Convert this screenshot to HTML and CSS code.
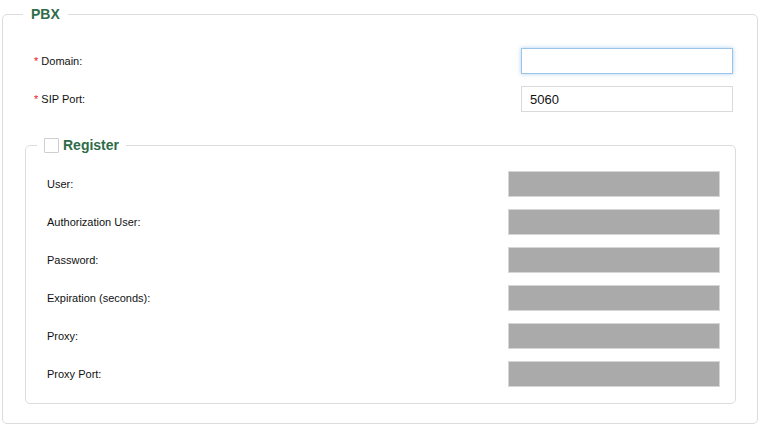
FILE: index.html
```html
<!DOCTYPE html>
<html>
<head>
<meta charset="utf-8">
<link rel="stylesheet" href="styles.css">
</head>
<body>
<fieldset class="group">
  <legend class="group-title">PBX</legend>
  <div class="row top-row">
    <label class="label"><span class="req">*</span> Domain:</label>
    <input class="field field-focus" type="text" value="">
  </div>
  <div class="row top-row">
    <label class="label"><span class="req">*</span> SIP Port:</label>
    <input class="field" type="text" value="5060">
  </div>
  <fieldset class="subgroup">
    <legend class="sub-title"><span class="check"></span><span>Register</span></legend>
    <div class="row sub-row"><label class="label">User:</label><input class="field field-disabled" type="text" disabled></div>
    <div class="row sub-row"><label class="label">Authorization User:</label><input class="field field-disabled" type="text" disabled></div>
    <div class="row sub-row"><label class="label">Password:</label><input class="field field-disabled" type="text" disabled></div>
    <div class="row sub-row"><label class="label">Expiration (seconds):</label><input class="field field-disabled" type="text" disabled></div>
    <div class="row sub-row"><label class="label">Proxy:</label><input class="field field-disabled" type="text" disabled></div>
    <div class="row sub-row"><label class="label">Proxy Port:</label><input class="field field-disabled" type="text" disabled></div>
  </fieldset>
</fieldset>
</body>
</html>
```
FILE: styles.css
```css
html, body {
  margin: 0;
  background: #fff;
}
body {
  padding: 6px 4px 0 2px;
  font-family: "Liberation Sans", Arial, sans-serif;
  color: #111;
}
.group {
  margin: 0;
  border: 1px solid #dcdcdc;
  border-radius: 5px;
  padding: 26px 21px 19px 20px;
  min-width: 0;
}
.group-title {
  padding: 0 8px;
  margin: 0;
  font-size: 14px;
  line-height: 16px;
  font-weight: bold;
  color: #2f6b47;
}
.row {
  display: flex;
  align-items: center;
  justify-content: space-between;
  height: 26px;
}
.top-row {
  padding-left: 11px;
  margin-right: 3px;
  margin-bottom: 12px;
}
.label {
  font-size: 11px;
}
.req {
  color: #e8141e;
}
.field {
  box-sizing: border-box;
  width: 212px;
  height: 26px;
  margin: 0;
  border: 1px solid #dadada;
  border-radius: 0;
  padding: 0 8px;
  font-family: "Liberation Sans", Arial, sans-serif;
  font-size: 13px;
  color: #111;
  background: #fff;
  outline: none;
}
.field-focus {
  border-color: #9cc3e8;
  box-shadow: 0 0 4px rgba(102, 170, 230, 0.55);
}
.field-disabled {
  background: #aaaaaa;
  border-color: #d6d6d6;
}
.subgroup {
  margin: 24px 0 0 2px;
  border: 1px solid #dcdcdc;
  border-radius: 5px;
  padding: 17px 15px 16px 11px;
  min-width: 0;
}
.sub-title {
  margin: 0;
  padding: 0 7px;
  display: flex;
  align-items: center;
  height: 18px;
  font-size: 14px;
  font-weight: bold;
  color: #2f6b47;
}
.check {
  box-sizing: border-box;
  width: 15px;
  height: 15px;
  border: 1px solid #cfcfcf;
  border-radius: 1px;
  background: #fff;
  margin-right: 4px;
}
.sub-row {
  padding-left: 10px;
  margin-bottom: 12px;
}
.sub-row:last-child {
  margin-bottom: 0;
}
```
